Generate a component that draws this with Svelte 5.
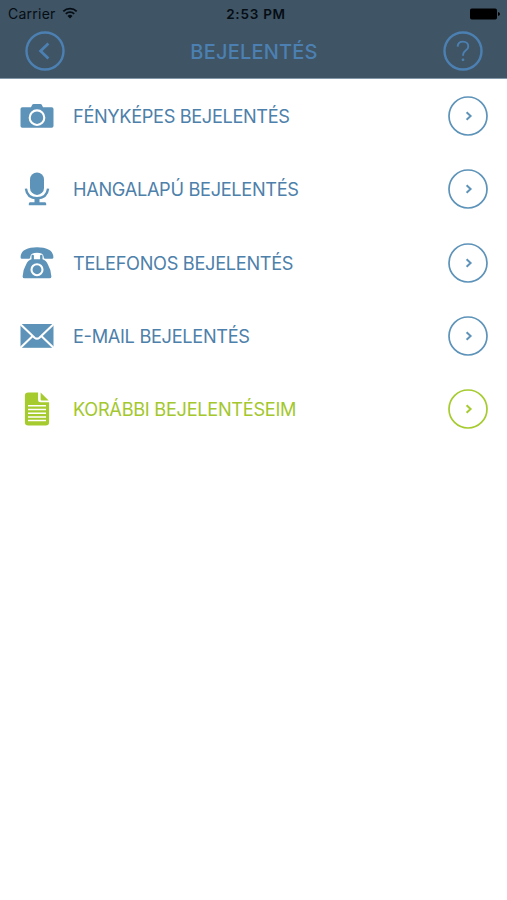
<script lang="ts">
  type Icon = 'camera' | 'mic' | 'phone' | 'mail' | 'document'
  type Item = { label: string; icon: Icon; width: number; highlighted?: boolean }

  const items: Item[] = [
    { label: 'FÉNYKÉPES BEJELENTÉS', icon: 'camera', width: 217 },
    { label: 'HANGALAPÚ BEJELENTÉS', icon: 'mic', width: 226 },
    { label: 'TELEFONOS BEJELENTÉS', icon: 'phone', width: 220.5 },
    { label: 'E-MAIL BEJELENTÉS', icon: 'mail', width: 177 },
    { label: 'KORÁBBI BEJELENTÉSEIM', icon: 'document', width: 223.5, highlighted: true },
  ]
</script>

<div class="screen">
  <header>
    <div class="status">
      <div class="carrier">
        <span>Carrier</span>
        <svg class="wifi" viewBox="0 0 16 12" aria-hidden="true">
          <path d="M1.3 4.3a9.6 9.6 0 0 1 13.4 0M3.8 6.8a6 6 0 0 1 8.4 0" />
          <path class="dot" d="M5.5 8.9a3.6 3.6 0 0 1 5 0L8 11.5z" />
        </svg>
      </div>
      <span class="time">2:53 PM</span>
      <svg class="battery" viewBox="0 0 30 12" aria-hidden="true">
        <rect x="0" y="0.5" width="27" height="11" rx="1.8" />
        <path d="M28 4q2 .4 2 2t-2 2z" />
      </svg>
    </div>
    <div class="nav">
      <button aria-label="Vissza">
        <svg viewBox="0 0 40 40">
          <circle cx="20" cy="20" r="18.5" />
          <path class="back" d="M23.4 12.6 15.600 20l7.800 7.400" />
        </svg>
      </button>
      <h1>BEJELENTÉS</h1>
      <button aria-label="Súgó">
        <svg viewBox="0 0 40 40">
          <circle cx="20" cy="20" r="18.5" />
          <path class="help" d="M14.6 15.6c.2-3.200 2.300-5 5.400-5s5.300 1.900 5.300 4.800c0 4.100-5.200 4.100-5.200 8.100v1.300" />
          <circle class="help-dot" cx="20" cy="28.8" r="1.4" />
        </svg>
      </button>
    </div>
  </header>

  <main>
    {#each items as item}
      <div class="item" class:highlighted={item.highlighted}>
        <svg class="icon" viewBox="0 0 34 34" aria-hidden="true">
          {#if item.icon === 'camera'}
            <path d="M2.3 8.2H11l1.2-2.4Q12.7 5 13.7 5h6.6q1 0 1.5.8L23 8.2h8.7q1.8 0 1.8 1.8v16.9q0 1.8-1.8 1.8H2.3q-1.8 0-1.8-1.8V10q0-1.8 1.8-1.8z" />
            <circle class="cut" cx="17" cy="18.7" r="7.3" />
          {:else if item.icon === 'mic'}
            <rect x="10" y="0.4" width="14" height="22.5" rx="7" />
            <path class="stroke" d="M5.9 16.6c.8 6.4 5.2 9.6 11.1 9.6s10.3-3.2 11.1-9.6" />
            <path d="M14.5 26h5v4.3h5.5q1.2.2 1.2 1.500v1.400H8.800v-1.400q0-1.300 1.200-1.500h4.500z" />
          {:else if item.icon === 'phone'}
            <path d="M.6 11.5C.5 4.600 7 1.300 17 1.300s16.500 3.300 16.400 10.200q0 1.300-1.400 1.300h-6.700q-1.500 0-1.600-1.500c-.2-3.200-2.300-4.600-6.700-4.600s-6.500 1.400-6.700 4.600q-.1 1.500-1.600 1.500H2Q.6 12.800.6 11.500z" />
            <path d="M11.500 9.800q0-1 1.200-1t1.200 1v3.500h6.200V9.800q0-1 1.200-1t1.200 1v3.500q3.600 1 5.400 5.300 3.500 6 3.500 11.800 0 1.900-1.900 1.900H4.500q-1.900 0-1.900-1.900 0-5.800 3.500-11.800 1.800-4.300 5.400-5.300z" />
            <circle class="cut" cx="17" cy="23.7" r="5.5" />
          {:else if item.icon === 'mail'}
            <rect x="0.5" y="5" width="33" height="23.8" />
            <path class="cut" d="M-.3 4.600 14.600 18.700q2.400 2 4.800 0L34.300 4.600M.2 29l12.500-12M33.800 29 21.300 17" />
          {:else}
            <path d="M8.200.4h9.900v7.400q0 2.500 2.500 2.500h8.500v20q0 3.300-3.300 3.300H8.200q-3.300 0-3.300-3.300V3.700Q4.900.4 8.200.4z" />
            <path d="M20.600.5l8.100 8.100h-7.100q-1 0-1-1z" />
            <path class="cut lines" d="M8 13.800h18M8 17.500h18M8 21.200h18M8 24.900h18M8 28.600h18" />
          {/if}
        </svg>
        <svg class="label" viewBox="0 0 360 40" role="img" aria-label={item.label}>
          <text x="0" y="26.5" textLength={item.width}>{item.label}</text>
        </svg>
        <svg class="arrow" viewBox="0 0 40 40" aria-hidden="true">
          <circle cx="20" cy="20" r="19" />
          <path d="M18.6 16.200 22.600 20l-4 3.800" />
        </svg>
      </div>
    {/each}
  </main>
</div>

<style>
  :global(body) {
    background: #fff;
  }
  .screen {
    min-height: 900px;
    font-family: Inter, 'Liberation Sans', sans-serif;
  }
  header {
    box-sizing: border-box;
    height: 79.4px;
    background: #3f5464;
    border-bottom: 1px solid #8298a8;
  }
  .status {
    display: grid;
    grid-template-columns: 1fr auto 1fr;
    align-items: center;
    height: 27px;
    padding: 0 7px 0 8px;
    color: #050d15;
    font-size: 14px;
  }
  .carrier {
    display: flex;
    align-items: center;
    gap: 6px;
    letter-spacing: 0.25px;
  }
  .wifi {
    width: 16px;
    height: 12px;
    margin-top: -2px;
    fill: none;
    stroke: #050d15;
    stroke-width: 1.8;
  }
  .wifi .dot {
    fill: #050d15;
    stroke: none;
  }
  .time {
    padding-left: 4px;
    font-size: 13.5px;
    font-weight: 600;
    letter-spacing: 0.75px;
  }
  .battery {
    width: 30px;
    height: 12px;
    justify-self: end;
    fill: #000;
  }
  .nav {
    display: flex;
    align-items: center;
    justify-content: space-between;
    height: 48px;
    padding: 0 24px 0 25px;
  }
  button {
    width: 40px;
    height: 40px;
    padding: 0;
    border: 0;
    background: none;
  }
  button svg {
    display: block;
    fill: none;
    stroke: #4c80b2;
    stroke-width: 2.4;
  }
  .back {
    stroke-width: 2.8;
  }
  .help {
    stroke-width: 1.9;
  }
  .help-dot {
    fill: #4c80b2;
    stroke: none;
  }
  h1 {
    margin: 0;
    padding-top: 2px;
    color: #4c80b2;
    font-size: 20px;
    font-weight: 500;
    letter-spacing: 0.2px;
  }
  .item {
    --tint: #5d93b9;
    --text: #4d80aa;
    display: flex;
    align-items: center;
    height: 73.3px;
    padding: 0 19px 0 20px;
  }
  .item.highlighted {
    --tint: #a6cb2f;
    --text: #a3c72d;
  }
  .icon {
    width: 34px;
    height: 34px;
    margin-right: 19px;
    fill: var(--tint);
  }
  .icon .stroke {
    fill: none;
    stroke: var(--tint);
    stroke-width: 2.4;
  }
  .icon .cut {
    fill: none;
    stroke: #fff;
    stroke-width: 2.1;
  }
  .icon .lines {
    stroke-width: 1.5;
  }
  .label {
    width: 360px;
    height: 40px;
    fill: var(--text);
    font-size: 18.2px;
  }
  .arrow {
    width: 40px;
    height: 40px;
    margin-left: auto;
    fill: none;
    stroke: var(--tint);
    stroke-width: 1.7;
  }
  .arrow path {
    stroke-width: 2;
  }
</style>
